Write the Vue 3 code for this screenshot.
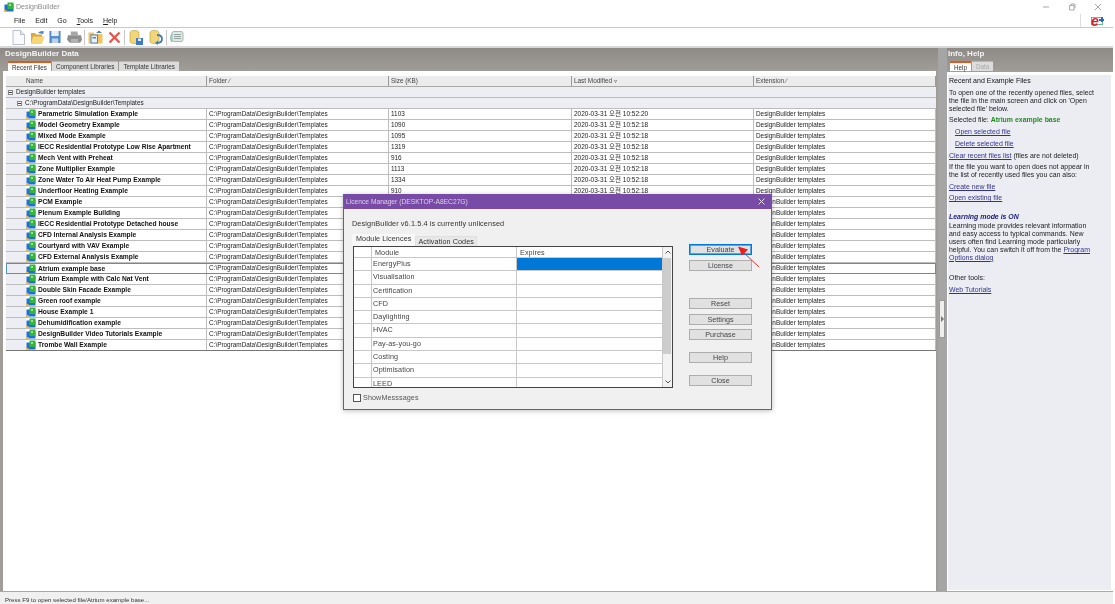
<template>
  <div class="app">
    <svg width="0" height="0" class="defs">
      <symbol id="bld" viewBox="0 0 10 10">
        <rect x="0.5" y="2.500" width="9" height="7" fill="#1f6fd8" />
        <rect x="3.500" y="0.500" width="6" height="6.500" fill="#35b53f" />
        <rect x="5" y="2" width="2" height="2" fill="#9be38b" />
        <rect x="0" y="8" width="2.500" height="2" fill="#e8b93a" />
      </symbol>
    </svg>

    <div class="titlebar">
      <svg class="app-icon" width="10" height="10"><use href="#bld" /></svg>
      <span class="app-title">DesignBuilder</span>
      <div class="win-btns">
        <svg width="8" height="8" viewBox="0 0 8 8"><path d="M1 4h6" stroke="#aaa" /></svg>
        <svg width="8" height="8" viewBox="0 0 8 8"><path d="M1.5 2.5h4.5v4.5h-4.5zM3 2.500v-1.500h4v4h-1" fill="none" stroke="#aaa" /></svg>
        <svg width="8" height="8" viewBox="0 0 8 8"><path d="M1 1l6 6M7 1l-6 6" stroke="#aaa" /></svg>
      </div>
    </div>

    <div class="menubar">
      <nav class="menus">
        <span>File</span><span>Edit</span><span>Go</span><span><u>T</u>ools</span><span><u>H</u>elp</span>
      </nav>
      <div class="logo-box">
        <span class="logo"><i>e</i></span>
      </div>
    </div>

    <div class="toolbar">
      <svg width="13" height="15" viewBox="0 0 13 15"><path d="M1 .5h7.500l4 4v10h-11.500z" fill="#fbfbfd" stroke="#b9bfd0" /><path d="M8.500 .5v4h4" fill="#e6e9f2" stroke="#b9bfd0" /></svg>
      <svg class="t2" width="15" height="14" viewBox="0 0 15 14"><path d="M1 3h4l1 1.500h6v9h-11z" fill="#d9a83c" /><path d="M3 6.500h11.500l-2.500 7h-11z" fill="#f6d675" /><path d="M8 3q3-3 6-1.500l-1 2.500z" fill="#4d86c6" /></svg>
      <svg class="t3" width="12" height="14" viewBox="0 0 13 14"><rect x=".5" y=".5" width="12" height="13" fill="#4f8acb" /><rect x="2.500" y=".5" width="8" height="5.500" fill="#e8eef8" /><rect x="3" y="8.500" width="7" height="5" fill="#bcd0ea" /></svg>
      <svg class="t4" width="15" height="14" viewBox="0 0 16 14"><path d="M4 1h7l1 4h-8z" fill="#a8a8a8" /><path d="M1 5h14l1 5-2 3h-11l-3-3z" fill="#8e8e8e" /><rect x="4" y="9" width="8" height="4" fill="#b2b2b2" /></svg>
      <i class="sep s1"></i>
      <svg class="t5" width="15" height="14" viewBox="0 0 15 14"><path d="M0.500 2.500h5l1 1.500h8v9.500h-14z" fill="#f0c65c" /><rect x="3" y="5" width="6.500" height="8" fill="#eaf1fa" stroke="#4d86c6" /><rect x="4.500" y="7" width="3.500" height="1.500" fill="#4d86c6" /><path d="M8 3l3-2.500 3 2.500z" fill="#4d86c6" /></svg>
      <svg class="t6" width="13" height="13" viewBox="0 0 13 13"><path d="M1.500 1.500l10 10M11.500 1.500l-10 10" stroke="#e8524a" stroke-width="2.200" /></svg>
      <i class="sep"></i>
      <svg class="t7" width="14" height="15" viewBox="0 0 14 15"><path d="M1 3q0-2.500 4.500-2.500t4.500 2.500v8q0 2.500-4.500 2.500t-4.500-2.500z" fill="#f3d777" stroke="#b7953c" stroke-width=".6" /><rect x="7" y="8" width="7" height="7" fill="#3f7cc4" /><rect x="9" y="8.500" width="3" height="2.500" fill="#e8eef8" /></svg>
      <svg class="t8" width="14" height="15" viewBox="0 0 14 15"><path d="M1 3q0-2.500 4.500-2.500t4.500 2.500v8q0 2.500-4.500 2.500t-4.500-2.500z" fill="#f3d777" stroke="#b7953c" stroke-width=".6" /><path d="M8 5q5 0 5 4t-5 4" fill="none" stroke="#3f7cc4" stroke-width="1.800" /><path d="M9 10.500l-3 2.500 3 2z" fill="#3f7cc4" /></svg>
      <i class="sep"></i>
      <svg class="t9" width="15" height="14" viewBox="0 0 15 14"><rect x="3" y="1.500" width="11" height="10" rx="2" fill="#dfe9e4" stroke="#9dbdad" /><path d="M5 4.500h7M5 6.500h7M5 8.500h7" stroke="#97a5a5" /><path d="M3 4q-2.500 4 0 8" fill="none" stroke="#8cc0a3" stroke-width="1.400" /></svg>
    </div>

    <div class="workspace">
      <section class="data-side">
        <h2 class="band-title">DesignBuilder Data</h2>
        <div class="tabs">
          <span class="tab active">Recent Files</span>
          <span class="tab">Component Libraries</span>
          <span class="tab">Template Libraries</span>
        </div>
        <div class="sheet">
          <div class="grid">
            <div class="grid-head">
              <span class="name-head">Name</span>
              <span>Folder ∕</span>
              <span>Size (KB)</span>
              <span>Last Modified ▿</span>
              <span>Extension ∕</span>
            </div>
            <div class="group-row level-1"><i class="toggle"></i>DesignBuilder templates</div>
            <div class="group-row level-2"><i class="toggle"></i>C:\ProgramData\DesignBuilder\Templates</div>
            <div
              v-for="file in files"
              :key="file.name"
              class="file-row"
              :class="{ selected: file.name === selectedFile }"
            >
              <span class="name-cell">
                <svg width="10" height="10"><use href="#bld" /></svg>
                <b>{{ file.name }}</b>
              </span>
              <span>C:\ProgramData\DesignBuilder\Templates</span>
              <span>{{ file.size }}</span>
              <span class="kr">2020-03-31 오전 {{ file.time }}</span>
              <span>DesignBuilder templates</span>
            </div>
          </div>
        </div>
      </section>

      <div class="splitter">
        <div class="split-btn"><i></i></div>
      </div>

      <aside class="info-side">
        <h2 class="band-title">Info, Help</h2>
        <div class="tabs">
          <span class="tab active">Help</span>
          <span class="tab off">Data</span>
        </div>
        <div class="info">
          <h3>Recent and Example Files</h3>
          <p class="gap-a">To open one of the recently opened files, select<br />the file in the main screen and click on 'Open<br />selected file' below.</p>
          <p class="gap-b">Selected file: <b class="green">Atrium example base</b></p>
          <p class="gap-c indent"><a>Open selected file</a></p>
          <p class="gap-c indent"><a>Delete selected file</a></p>
          <p class="gap-c"><a>Clear recent files list</a> (files are not deleted)</p>
          <p class="gap-b">If the file you want to open does not appear in<br />the list of recently used files you can also:</p>
          <p class="gap-c"><a>Create new file</a></p>
          <p class="gap-c"><a>Open existing file</a></p>
          <p class="learn"><b><i>Learning mode is ON</i></b></p>
          <p class="gap-0">Learning mode provides relevant information<br />and easy access to typical commands. New<br />users often find Learning mode particularly<br />helpful. You can switch it off from the <a>Program</a><br /><a>Options dialog</a></p>
          <p class="other">Other tools:</p>
          <p class="gap-c"><a>Web Tutorials</a></p>
        </div>
      </aside>
    </div>

    <footer class="statusbar">Press F9 to open selected file/Atrium example base...</footer>

    <div class="dialog">
      <div class="dlg-title">
        <span>Licence Manager (DESKTOP-A8EC27G)</span>
        <svg width="7" height="7" viewBox="0 0 7 7"><path d="M.5 .5l6 6M6.500 .5l-6 6" stroke="#e8def2" /></svg>
      </div>
      <div class="dlg-body">
        <p class="dlg-msg">DesignBuilder v6.1.5.4 is currently unlicensed</p>
        <div class="dlg-main">
          <div class="dlg-left">
            <div class="dlg-tabs">
              <span class="dlg-tab on">Module Licences</span>
              <span class="dlg-tab">Activation Codes</span>
            </div>
            <div class="lic-grid">
              <div class="lic-table">
                <div class="lic-row lic-head">
                  <span></span><span class="pad">Module</span><span class="pad">Expires</span>
                </div>
                <div v-for="(mod, i) in modules" :key="mod" class="lic-row">
                  <span></span><span>{{ mod }}</span><span :class="{ picked: i === 0 }"></span>
                </div>
              </div>
              <div class="lic-scroll">
                <svg width="10" height="11" viewBox="0 0 10 11"><path d="M2.500 6.500l2.500-2.500 2.500 2.500" fill="none" stroke="#555" /></svg>
                <div class="thumb"></div>
                <svg width="10" height="11" viewBox="0 0 10 11"><path d="M2.500 4.500l2.500 2.500 2.500-2.500" fill="none" stroke="#555" /></svg>
              </div>
            </div>
            <label class="show-msg"><i class="box"></i>ShowMesssages</label>
          </div>
          <div class="dlg-btns">
            <button class="primary">Evaluate</button>
            <button class="b2">License</button>
            <button class="b3">Reset</button>
            <button class="b4">Settings</button>
            <button class="b4">Purchase</button>
            <button class="b5">Help</button>
            <button class="b6">Close</button>
          </div>
        </div>
      </div>
    </div>

    <svg class="arrow" width="26" height="24" viewBox="0 0 26 24">
      <path d="M24 23L8 8" stroke="#ef2b2b" stroke-width="1" />
      <path d="M3 2.500L13 5.500 7 11.500z" fill="#ef1c1c" />
    </svg>
  </div>
</template>

<script setup>
const selectedFile = 'Atrium example base'

const files = [
  { name: 'Parametric Simulation Example', size: '1103', time: '10:52:20' },
  { name: 'Model Geometry Example', size: '1090', time: '10:52:18' },
  { name: 'Mixed Mode Example', size: '1095', time: '10:52:18' },
  { name: 'IECC Residential Prototype Low Rise Apartment', size: '1319', time: '10:52:18' },
  { name: 'Mech Vent with Preheat', size: '916', time: '10:52:18' },
  { name: 'Zone Multiplier Example', size: '1113', time: '10:52:18' },
  { name: 'Zone Water To Air Heat Pump Example', size: '1334', time: '10:52:18' },
  { name: 'Underfloor Heating Example', size: '910', time: '10:52:18' },
  { name: 'PCM Example', size: '', time: '10:52:18' },
  { name: 'Plenum Example Building', size: '', time: '10:52:18' },
  { name: 'IECC Residential Prototype Detached house', size: '', time: '10:52:18' },
  { name: 'CFD Internal Analysis Example', size: '', time: '10:52:18' },
  { name: 'Courtyard with VAV Example', size: '', time: '10:52:18' },
  { name: 'CFD External Analysis Example', size: '', time: '10:52:18' },
  { name: 'Atrium example base', size: '', time: '10:52:18' },
  { name: 'Atrium Example with Calc Nat Vent', size: '', time: '10:52:18' },
  { name: 'Double Skin Facade Example', size: '', time: '10:52:18' },
  { name: 'Green roof example', size: '', time: '10:52:18' },
  { name: 'House Example 1', size: '', time: '10:52:18' },
  { name: 'Dehumidification example', size: '', time: '10:52:18' },
  { name: 'DesignBuilder Video Tutorials Example', size: '', time: '10:52:18' },
  { name: 'Trombe Wall Example', size: '', time: '10:52:18' }
]

const modules = [
  'EnergyPlus', 'Visualisation', 'Certification', 'CFD', 'Daylighting',
  'HVAC', 'Pay-as-you-go', 'Costing', 'Optimisation', 'LEED'
]
</script>

<style>
html, body { margin: 0; background: #fff; }
</style>

<style scoped>
.app {
  position: relative;
  width: 1113px;
  height: 604px;
  overflow: hidden;
  display: flex;
  flex-direction: column;
  font: 7px/8px "Liberation Sans", "Noto Sans CJK KR", sans-serif;
  color: #222;
  background: #fff;
  filter: blur(.3px);
}
.defs { position: absolute; }

.titlebar {
  height: 14px;
  display: flex;
  align-items: center;
  padding-left: 4px;
  flex: none;
}
.app-icon { margin-right: 2px; }
.app-title { color: #8a8a8a; font-size: 7px; }
.win-btns {
  margin-left: auto;
  display: flex;
  gap: 18px;
  padding-right: 11px;
}

.menubar {
  height: 13px;
  flex: none;
  display: flex;
  justify-content: space-between;
  border-bottom: 1px solid #c9c9c9;
}
.menus {
  display: flex;
  gap: 10px;
  padding-left: 14px;
  align-items: center;
  font-size: 7px;
}
.logo-box {
  border-left: 1px solid #ddd;
  width: 33px;
  padding-left: 10px;
  box-sizing: border-box;
  display: flex;
  align-items: center;
}
.logo {
  position: relative;
  width: 12px;
  height: 8px;
  margin-top: 1px;
  border: 1px solid #6dbb8a;
  box-sizing: border-box;
}
.logo i {
  position: absolute;
  left: -1px;
  top: -3px;
  font: italic 700 14px/12px "Liberation Sans", sans-serif;
  color: #e3182d;
}
.logo::after {
  content: "";
  position: absolute;
  right: -2px;
  top: -1px;
  width: 5px;
  height: 5px;
  background:
    linear-gradient(#2a66c9, #2a66c9) center / 5px 2px no-repeat,
    linear-gradient(#2a66c9, #2a66c9) center / 2px 5px no-repeat;
}

.toolbar {
  height: 18px;
  flex: none;
  display: flex;
  align-items: center;
  padding-left: 12px;
  border-bottom: 2px solid #d8d8d8;
}
.sep { width: 1px; height: 15px; background: #c8c8c8; margin: 0 3px; }
.t2 { margin-left: 5px; }
.t3 { margin-left: 4px; }
.t4 { margin-left: 6px; }
.s1 { margin-left: 2px; }
.t6 { margin-left: 5px; }
.t7 { margin-left: 1px; }
.t8 { margin-left: 6px; }
.t9 { margin-left: -1px; }

.workspace {
  flex: 1;
  display: flex;
  min-height: 0;
  background: #a5a29e;
}
.band-title {
  margin: 0;
  height: 13px;
  padding: 2px 0 0 5px;
  box-sizing: border-box;
  font-size: 8px;
  line-height: 8px;
  color: #f4f4f4;
  font-weight: 700;
}
.data-side, .info-side {
  display: flex;
  flex-direction: column;
  min-height: 0;
  background: linear-gradient(#8e8a86 0, #a09d99 23px);
}
.data-side { width: 938px; flex: none; }
.info-side { flex: 1; }
.info-side .band-title { padding-left: 1px; }

.tabs {
  display: flex;
  height: 10px;
  padding-left: 8px;
  gap: 1px;
  flex: none;
}
.info-side .tabs { padding-left: 3px; }
.tab {
  padding: 1px 4px 0;
  background: #dcdcdc;
  color: #333;
  font-size: 6.300px;
  line-height: 8px;
  border-top: 1px solid #b5b5b5;
  box-sizing: border-box;
}
.tab.active { background: #fff; border-top: 2px solid #e8551a; }
.tab.off { color: #aaa; }

.sheet {
  flex: 1;
  margin-left: 3px;
  margin-right: 2px;
  background: #fff;
  padding: 5px 0 0 3px;
  min-height: 0;
}
.grid { width: 930px; }
.grid-head, .file-row {
  display: grid;
  grid-template-columns: 201px 182px 183px 182px 182px;
}
.grid-head {
  height: 11px;
  background: #ececec;
  border-bottom: 1px solid #a8a8a8;
  box-sizing: border-box;
  line-height: 10px;
  color: #444;
  font-size: 6.400px;
}
.grid-head span { padding-left: 2px; border-right: 1px solid #9a9a9a; }
.grid-head .name-head { padding-left: 20px; }
.group-row {
  height: 11px;
  box-sizing: border-box;
  background: #edeef3;
  border-bottom: 1px solid #bcbcbc;
  display: flex;
  align-items: center;
  font-size: 6.400px;
}
.level-1 { padding-left: 2px; }
.level-2 { padding-left: 11px; }
.toggle {
  width: 5px;
  height: 5px;
  margin-right: 3px;
  border: 1px solid #888;
  background: linear-gradient(#444, #444) center / 3px 1px no-repeat #fff;
  box-sizing: border-box;
}
.file-row {
  height: 11px;
  box-sizing: border-box;
  border-bottom: 1px solid #bdbdbd;
  line-height: 10px;
  position: relative;
  background: linear-gradient(#edeef3, #edeef3) left / 20px 100% no-repeat #fff;
  font-size: 6.400px;
}
.file-row > span {
  padding-left: 2px;
  border-right: 1px solid #bdbdbd;
  white-space: nowrap;
  overflow: hidden;
}
.file-row:last-child { border-bottom-color: #777; }
.file-row.selected {
  border-bottom: 0;
  outline: 1px solid #4d92cc;
  outline-offset: -1px;
}
.name-cell {
  padding-left: 20px !important;
  display: flex;
  align-items: center;
  gap: 2px;
}
.name-cell b { font-size: 6.700px; color: #111; }
.kr { font-size: 6.500px; }

.splitter {
  width: 9px;
  flex: none;
  padding: 252px 2px 0 1px;
  box-sizing: border-box;
  background: #a5a5a5;
}
.split-btn {
  height: 38px;
  background: #eee;
  border: 1px solid #999;
  box-sizing: border-box;
  display: flex;
  align-items: center;
  justify-content: center;
}
.split-btn i {
  border-left: 3px solid #777;
  border-top: 3px solid transparent;
  border-bottom: 3px solid transparent;
}

.info {
  flex: 1;
  background: #ecedf3;
  border: 1px solid #fff;
  border-top-width: 3px;
  border-right-width: 2px;
  padding: 2px 3px 0 1px;
  margin-top: 1px;
  color: #222;
  font-size: 6.950px;
  line-height: 7.900px;
}
.info h3 { margin: 0; font-size: 7px; font-weight: 400; color: #111; }
.info p { margin: 0; }
.info a { color: #33338f; text-decoration: underline; }
.gap-a { padding-top: 4.500px; }
.gap-b { padding-top: 3px; }
.gap-c { padding-top: 4px; }
.gap-0 { padding-top: 1px; }
.indent { padding-left: 6px; }
.green { color: #1f8f1f; }
.learn { padding-top: 11px; color: #1a1a80; }
.other { padding-top: 12px; }

.statusbar {
  height: 13px;
  box-sizing: border-box;
  flex: none;
  background: #f0f0f0;
  border-top: 1px solid #a8a8a8;
  padding: 4px 0 0 5px;
  font-size: 6.100px;
  color: #333;
}

.dialog {
  position: absolute;
  left: 343px;
  top: 194px;
  width: 429px;
  height: 216px;
  box-sizing: border-box;
  border: 1px solid #7a4fa6;
  border-top: 0;
  background: #f0f0f0;
  box-shadow: 0 1px 5px rgba(0, 0, 0, .25);
  display: flex;
  flex-direction: column;
}
.dlg-title {
  height: 15px;
  flex: none;
  background: #784ca6;
  color: #ddd0ea;
  display: flex;
  align-items: center;
  justify-content: space-between;
  padding: 0 6px 0 2px;
  font-size: 6.700px;
}
.dlg-body { flex: 1; padding: 11px 0 0 8px; font-size: 7.200px; letter-spacing: .1px; }
.dlg-msg { margin: 0; height: 14px; color: #333; font-size: 7.300px; }
.dlg-main { display: flex; }
.dlg-left { width: 337px; flex: none; }
.dlg-tabs { display: flex; height: 12px; align-items: flex-end; }
.dlg-tab { padding: 0 2px 0 2px; height: 10px; background: #e8e8e8; border: 1px solid #e0e0e0; border-bottom: 0; box-sizing: border-box; line-height: 9px; color: #333; }
.dlg-tab.on { height: 12px; background: #f8f8f8; padding: 0 4px; line-height: 10px; border: 0; }
.lic-grid {
  width: 320px;
  height: 142px;
  margin-left: 1px;
  box-sizing: border-box;
  border: 1px solid #444;
  display: flex;
  background: #fff;
  overflow: hidden;
}
.lic-table { flex: none; width: 309px; }
.lic-row {
  display: grid;
  grid-template-columns: 18px 145px 146px;
  height: 13.300px;
  box-sizing: border-box;
  border-bottom: 1px solid #c8c8c8;
  line-height: 12px;
  color: #444;
}
.lic-row span { border-right: 1px solid #c8c8c8; padding-left: 1px; }
.lic-head { height: 11px; line-height: 11px; }
.lic-head .pad { padding-left: 3px; }
.lic-row .picked { background: #0078d7; }
.lic-scroll {
  flex: 1;
  display: flex;
  flex-direction: column;
  justify-content: space-between;
  background: #f3f3f3;
  position: relative;
}
.thumb { position: absolute; top: 11px; left: 0; right: 2px; height: 96px; background: #cdcdcd; }
.lic-scroll svg:last-child { margin-top: auto; }
.show-msg { display: flex; align-items: center; gap: 2px; margin: 6px 0 0 1px; color: #555; }
.box { width: 8px; height: 8px; border: 1px solid #555; box-sizing: border-box; background: #fff; }

.dlg-btns { display: flex; flex-direction: column; padding-top: 10px; }
.dlg-btns button {
  width: 63px;
  height: 11px;
  padding: 0;
  font: inherit;
  line-height: 9px;
  background: #e1e1e1;
  border: 1px solid #adadad;
  color: #444;
  flex: none;
}
.dlg-btns .primary { border-color: #0078d7; box-shadow: inset 0 0 0 1px #5aa6e0; }
.b2 { margin-top: 5px; }
.b3 { margin-top: 27px; }
.b4 { margin-top: 4.500px; }
.b5 { margin-top: 11.500px; }
.b6 { margin-top: 12px; }

.arrow { position: absolute; left: 735px; top: 244px; }
</style>
